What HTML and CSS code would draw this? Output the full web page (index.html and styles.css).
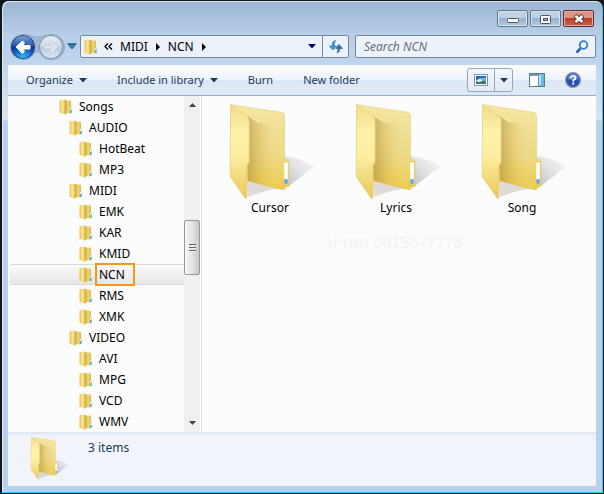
FILE: index.html
```html
<!DOCTYPE html>
<html lang="en">
<head>
<meta charset="utf-8">
<title>NCN</title>
<link rel="stylesheet" href="styles.css">
</head>
<body>
<svg class="defs" aria-hidden="true">
  <defs>
    <linearGradient id="backPanel" x1="0" y1="0" x2="0" y2="1"><stop offset="0" stop-color="#f5e6a2"/><stop offset=".6" stop-color="#eed982"/><stop offset="1" stop-color="#eeca48"/></linearGradient>
    <linearGradient id="backShade" x1="0" y1="0" x2="1" y2="0"><stop offset="0" stop-color="#a8893a" stop-opacity=".6"/><stop offset=".45" stop-color="#c6a850" stop-opacity=".2"/><stop offset="1" stop-color="#fff" stop-opacity="0"/></linearGradient>
    <linearGradient id="flap" x1="0" y1="0" x2="0" y2="1"><stop offset="0" stop-color="#f0dc8a"/><stop offset=".3" stop-color="#fff2ab"/><stop offset=".55" stop-color="#fdeea0"/><stop offset=".75" stop-color="#f3dc80"/><stop offset="1" stop-color="#ebc857"/></linearGradient>
    <linearGradient id="cast" x1="0" y1="1" x2="1" y2="0"><stop offset="0" stop-color="#999" stop-opacity=".65"/><stop offset="1" stop-color="#ccc" stop-opacity=".1"/></linearGradient>
    <linearGradient id="miniL" x1="0" y1="0" x2="1" y2="0"><stop offset="0" stop-color="#e6c55c"/><stop offset=".5" stop-color="#fbe893"/><stop offset="1" stop-color="#cfa636"/></linearGradient>
    <linearGradient id="miniR" x1="0" y1="0" x2="1" y2="0"><stop offset="0" stop-color="#b98f2c"/><stop offset=".5" stop-color="#f0d878"/><stop offset="1" stop-color="#d4ae3f"/></linearGradient>
    <symbol id="folder" viewBox="-12 0 282 297">
      <path d="M170 165 Q215 163 265 197 Q235 212 227 224 Q205 238 182 258Z" fill="url(#cast)"/>
      <path d="M58 236 L158 262 Q118 266 62 288Z" fill="#998f88" opacity=".3"/>
      <path d="M10 8 L163 31 Q173 33 173 43 V173 L186 177 V256 L174 259 V265 L167 266 L62 240 L10 200Z" fill="url(#backPanel)" stroke="#dfc670" stroke-width="1.500"/>
      <path d="M58 42 L90 62 L167 70 L172 250 L167 264 L62 239Z" fill="url(#backShade)"/>
      <path d="M172 184h11v64h-11z" fill="#fff"/><path d="M172 234h11v14h-11z" fill="#68a4e8"/>
      <path d="M10 8 L60 44 Q66 48 66 55 V184 L59 191 V290 Q57 296 53 291 L8 226Z" fill="url(#flap)" stroke="#dfc670" stroke-width="1.500"/>
    </symbol>
    <symbol id="mini" viewBox="0 0 14 16">
      <path d="M5 1.5 11 1.5Q12 1.5 12 3V8.500L13 9V13.500L11 14.500 5 14Z" fill="url(#miniR)"/>
      <path d="M0.500 2Q.5 1 1.500 1L5 .5Q7 .5 7 2.500V14Q7 15.500 5.500 15.500L1 14Q.5 14 .5 13Z" fill="url(#miniL)"/>
      <path d="M11 9h1.500v5h-1.500z" fill="#eefaff"/><path d="M11 11h1.500v3h-1.500z" fill="#3db0ea"/>
    </symbol>
  </defs>
</svg>
<main class="window">
  <header class="titlebar">
    <button class="cap" aria-label="Minimize"><svg width="30" height="16"><rect x="9.500" y="7.500" width="11" height="4" rx="1" fill="#fff" stroke="#4b5665"/></svg></button>
    <button class="cap" aria-label="Maximize"><svg width="30" height="16"><rect x="9.500" y="4.500" width="10" height="8" rx="1" fill="#fff" stroke="#4b5665"/><rect x="12.500" y="7.500" width="4" height="2" fill="#9db7d4" stroke="#4b5665"/></svg></button>
    <button class="cap close" aria-label="Close"><svg width="30" height="16"><path d="M11 4.500 19 11.500M19 4.500 11 11.500" stroke="#5b3a3c" stroke-width="4.500"/><path d="M11.500 5 18.500 11M18.500 5 11.500 11" stroke="#fff" stroke-width="2.600"/></svg></button>
  </header>
  <nav class="navbar">
    <div class="travel">
      <svg class="plate" width="56" height="26" viewBox="0 0 56 26" aria-hidden="true"><path d="M14 .5Q20 .5 24 2.500Q28 4 33 2.500Q38 .5 43 .5A12.500 12.500 0 0 1 43 25.500Q34 25.500 30.500 18H26Q22 25.500 14 25.500A12.500 12.500 0 0 1 14 .5Z" fill="#a0b7d0" stroke="#91a8c2"/></svg>
      <button class="round back" aria-label="Back"><svg width="24" height="24"><path d="M5 12 11.500 6 13.500 8 11.500 10.500H19V14H11.500L13.500 16.500 11.500 18.500Z" fill="#fff" stroke="#fff" stroke-linejoin="round"/></svg></button>
      <button class="round forward" aria-label="Forward"><svg width="24" height="24"><path d="M19 12 12.500 6 10.500 8 12.500 10.500H5V14H12.500L10.500 16.500 12.500 18.500Z" fill="#dde6ee" stroke="#c3d0dc" stroke-linejoin="round"/></svg></button>
    </div>
    <button class="recent" aria-label="Recent pages"><svg width="10" height="7"><path d="M.8.8H9.200L5 5.800Z" fill="#3187c7" stroke="#17466f"/></svg></button>
    <div class="address">
      <svg width="14" height="16"><use href="#mini"/></svg>
      <svg class="chev" width="9" height="8"><path d="M4 .5 1 3.500 4 6.500M8 .5 5 3.500 8 6.500" fill="none" stroke="#000" stroke-width="1.300"/></svg>
      <a href="#midi">MIDI</a><svg class="tri" width="4" height="8"><path d="M0 0 4 4 0 8Z"/></svg>
      <a href="#ncn">NCN</a><svg class="tri" width="4" height="8"><path d="M0 0 4 4 0 8Z"/></svg>
      <button class="history" aria-label="Previous locations"><svg width="8" height="5"><path d="M0 0H8L4 4.500Z" fill="#000b63"/></svg></button>
      <button class="refresh" aria-label="Refresh"><svg width="14" height="14"><path d="M6.500.5Q3 1 3 6H.3L4 10 7.500 6H5.300Q5 2.500 6.500.5Z" fill="#4295d9" stroke="#2b6fb4" stroke-width=".6"/><path d="M8 13Q11 12 10.800 8.500H13.500L10 4.500 6.700 8.500H8.800Q9.500 11.500 8 13Z" fill="#2b6fc5" stroke="#1f529a" stroke-width=".6"/></svg></button>
    </div>
    <label class="search"><input type="search" aria-label="Search NCN" placeholder="Search NCN"><svg width="14" height="14"><path d="M1.500 12.500 5.500 8.500" stroke="#27669e" stroke-width="2.500"/><circle cx="8.500" cy="5" r="3.800" fill="#f3faff" stroke="#2e7fc6" stroke-width="1.800"/></svg></label>
  </nav>
  <section class="client">
    <div class="toolbar">
      <button>Organize <svg width="8" height="5"><path d="M0 0H8L4 4.500Z"/></svg></button>
      <button>Include in library <svg width="8" height="5"><path d="M0 0H8L4 4.500Z"/></svg></button>
      <button>Burn</button>
      <button>New folder</button>
      <div class="views">
        <button aria-label="Change your view"><svg width="14" height="12"><rect x=".5" y=".5" width="13" height="11" fill="#fff" stroke="#8594a5"/><path d="M2 2h10v8H2z" fill="#6fb8e5"/><path d="M2 2h10v2Q6 3 2 6Z" fill="#246aab"/><path d="M2 8Q7 4 12 8V10H2Z" fill="#38766a"/><path d="M2 7 6 5 9 7 5 8Z" fill="#e7f8ff"/></svg></button>
        <button aria-label="More view options"><svg width="8" height="5"><path d="M0 0H8L4 4.500Z"/></svg></button>
      </div>
      <button class="pane" aria-label="Preview pane"><svg width="16" height="14"><rect x=".5" y=".5" width="15" height="13" fill="#fff" stroke="#60798f"/><path d="M1 1h14v2H1z" fill="#8296a8"/><path d="M10 1h5v12h-5z" fill="#60bde0"/><path d="M10 2h2v10h-2z" fill="#b5e7f5"/><path d="M9.500 1v12" stroke="#6e8da4"/></svg></button>
      <button class="help" aria-label="Help"><svg width="16" height="16"><circle cx="8" cy="8" r="7.400" fill="#2850ad" stroke="#8c95a5" stroke-width="1.200"/><path d="M2.500 7A5.500 5.500 0 0 1 13.500 7Q8 9 2.500 7Z" fill="#6389d1"/><path d="M5.700 6.200Q5.700 4 8.100 4T10.400 6Q10.400 7 9 7.800Q8.200 8.300 8.200 9.700" fill="none" stroke="#fff" stroke-width="1.700"/><circle cx="8.200" cy="11.700" r="1.100" fill="#fff"/></svg></button>
    </div>
    <div class="body">
      <ul class="tree">
        <li><svg><use href="#mini"/></svg><span>Songs</span></li>
        <li class="l1"><svg><use href="#mini"/></svg><span>AUDIO</span></li>
        <li class="l2"><svg><use href="#mini"/></svg><span>HotBeat</span></li>
        <li class="l2"><svg><use href="#mini"/></svg><span>MP3</span></li>
        <li class="l1"><svg><use href="#mini"/></svg><span>MIDI</span></li>
        <li class="l2"><svg><use href="#mini"/></svg><span>EMK</span></li>
        <li class="l2"><svg><use href="#mini"/></svg><span>KAR</span></li>
        <li class="l2"><svg><use href="#mini"/></svg><span>KMID</span></li>
        <li class="l2 selected"><svg><use href="#mini"/></svg><span>NCN</span></li>
        <li class="l2"><svg><use href="#mini"/></svg><span>RMS</span></li>
        <li class="l2"><svg><use href="#mini"/></svg><span>XMK</span></li>
        <li class="l1"><svg><use href="#mini"/></svg><span>VIDEO</span></li>
        <li class="l2"><svg><use href="#mini"/></svg><span>AVI</span></li>
        <li class="l2"><svg><use href="#mini"/></svg><span>MPG</span></li>
        <li class="l2"><svg><use href="#mini"/></svg><span>VCD</span></li>
        <li class="l2"><svg><use href="#mini"/></svg><span>WMV</span></li>
      </ul>
      <div class="scroll">
        <svg width="7" height="4"><path d="M0 4 3.500 0 7 4Z"/></svg>
        <div class="track"><div class="thumb"><i></i><i></i><i></i></div></div>
        <svg width="7" height="4"><path d="M0 0H7L3.500 4Z"/></svg>
      </div>
      <div class="files">
        <div class="grid">
          <figure><svg><use href="#folder"/></svg><figcaption>Cursor</figcaption></figure>
          <figure><svg><use href="#folder"/></svg><figcaption>Lyrics</figcaption></figure>
          <figure><svg><use href="#folder"/></svg><figcaption>Song</figcaption></figure>
        </div>
        <p class="mark">มานพ 0815677778</p>
      </div>
    </div>
    <footer class="details">
      <svg><use href="#folder"/></svg><span>3 items</span>
    </footer>
  </section>
</main>
</body>
</html>
```
FILE: styles.css
```css
* { box-sizing: border-box; }
body { margin: 0; background: #15161a; font: 12px/16px "Noto Sans", "Open Sans", sans-serif; color: #000; }
button { font: inherit; color: inherit; border: 0; padding: 0; margin: 0; background: none; display: flex; align-items: center; justify-content: center; }
svg { display: block; flex: none; }
.defs { position: absolute; width: 0; height: 0; }

.window {
  min-height: 100vh; display: flex; flex-direction: column;
  border: solid #15161a; border-width: 1px 1px 1px 2px; border-radius: 8px 8px 0 0;
  padding: 0 7px 7px 6px;
  background: linear-gradient(#9bb5d0, #b8cee8 34px, #bfd5ee 60px, #d6e4f4 119px, #b9d1ea 120px);
  box-shadow: inset -1px -1px #35c8e8, inset 1px 1px #dce8f4;
}
.titlebar { height: 33px; display: flex; justify-content: flex-end; align-items: flex-start; gap: 2px; padding: 9px 2px 0 0; }
.cap { width: 31px; height: 17px; border: 1px solid #66788d; border-radius: 2px; box-shadow: inset 0 0 0 1px #d6e4f2; background: linear-gradient(#bed1e5 45%, #98b2cf 50%, #b2c8e0); }
.close { border-color: #5c2a30; box-shadow: inset 0 0 0 1px #e5aaa0; background: linear-gradient(#dc9583 45%, #bc3c28 50%, #cf6049); }

.navbar { display: flex; align-items: center; height: 25px; margin-bottom: 6px; }
.travel { position: relative; display: flex; gap: 4px; padding: 0 2px 0 3px; }
.plate { position: absolute; left: 1px; top: -1px; }
.round { position: relative; width: 24px; height: 24px; border-radius: 50%; flex: none; }
.back { background: radial-gradient(circle at 50% 100%, #35bdf2 5%, #1663c8 38%, transparent 60%), linear-gradient(#84a8dc, #2458aa 45%, #072a83 52%, #0e48b0); box-shadow: inset 0 0 0 1px #234684; }
.forward { background: linear-gradient(#e8eff6, #ccd9e6 50%, #b9cbdc 52%, #dfe9f2); box-shadow: inset 0 0 0 1px #7e92a8; }
.recent { width: 14px; margin-right: 1px; }
.address, .search { height: 23px; display: flex; align-items: center; background: #ecf2fa; border: 1px solid #75889c; border-radius: 2px; min-width: 0; }
.address { flex: 264 1 0; padding-left: 3px; margin-right: 6px; }
.address a { color: #000; text-decoration: none; }
.chev { margin: 0 7px 0 6px; }
.tri { margin: 0 8px; }
.history { width: 20px; margin-left: auto; align-self: stretch; }
.refresh { width: 26px; align-self: stretch; border-left: 1px solid #75889c; }
.search { flex: 225 1 0; padding: 0 6px 0 8px; }
.search input { flex: 1; min-width: 0; border: 0; padding: 0; background: none; font: inherit; font-style: italic; outline: 0; }
.search input::placeholder { color: #6b6f75; opacity: 1; }

.client { flex: 1; display: flex; flex-direction: column; }
.toolbar { display: flex; align-items: center; height: 31px; padding: 0 15px 0 18px; font-size: 11px; color: #1e395b; background: linear-gradient(#fbfdff, #edf3fb 48%, #dce7f5 52%, #dfe9f6); border-bottom: 1px solid #9dadc8; }
.toolbar > button { gap: 6px; margin-right: 30px; }
.toolbar path:only-child { fill: #1e395b; }
.views { display: flex; height: 24px; margin-left: auto; margin-right: 16px; border: 1px solid #97a8bd; border-radius: 3px; background: linear-gradient(#f4f8fd, #e1eaf6); }
.views button { width: 26px; }
.views button + button { width: 18px; border-left: 1px solid #97a8bd; }
.toolbar > .pane { margin-right: 20px; }
.toolbar > .help { margin-right: 0; }

.body { flex: 1; display: flex; background: #fcfcfc; }
.tree { list-style: none; margin: 0; padding: 0; width: 176px; flex: none; }
.tree li { height: 21px; display: flex; align-items: center; gap: 6px; padding-left: 50px; margin-left: 1px; border: solid transparent; border-width: 1px 0 1px 0; border-radius: 3px 0 0 3px; }
.tree .l1 { padding-left: 60px; }
.tree .l2 { padding-left: 70px; }
.tree svg { width: 14px; height: 16px; }
.tree .selected { background: linear-gradient(#fafafa, #e6e6e6); border-color: #d8d8d8; }
.selected span { border: 2px solid #f7981d; padding: 1px 8px 1px 2px; margin: 0 0 0 -4px; line-height: 17px; }
.scroll { width: 16px; display: flex; flex-direction: column; align-items: center; padding: 7px 0; background: #f0f0f0; fill: #444; }
.track { flex: 1; align-self: stretch; padding-top: 113px; }
.thumb { height: 55px; border: 1px solid #979797; border-radius: 2px; background: linear-gradient(90deg, #f6f6f6, #e4e4e4 50%, #c8c8c8); display: flex; flex-direction: column; gap: 1px; align-items: center; justify-content: center; }
.thumb i { width: 7px; height: 2px; background: #666; border-bottom: 1px solid #eee; }
.files { flex: 1; margin-left: 1px; border-left: 1px solid #d6e2f1; }
.grid { display: grid; grid-template-columns: repeat(auto-fill, 126px); padding: 6px 0 0 5px; }
figure { margin: 0; display: flex; flex-direction: column; align-items: center; }
figure svg { width: 94px; height: 98px; }
figcaption { line-height: 16px; }
.mark { margin: 19px 8px 0 0; text-align: center; font-family: "Liberation Sans", sans-serif; font-size: 16px; color: #f3f3f3; }
.details { display: flex; height: 54px; padding: 4px 20px; gap: 18px; color: #1e395b; background: linear-gradient(#dae5f2, #f1f5fb 4px); }
.details svg { width: 42px; height: 44px; }
.details span { padding-top: 4px; }
```
